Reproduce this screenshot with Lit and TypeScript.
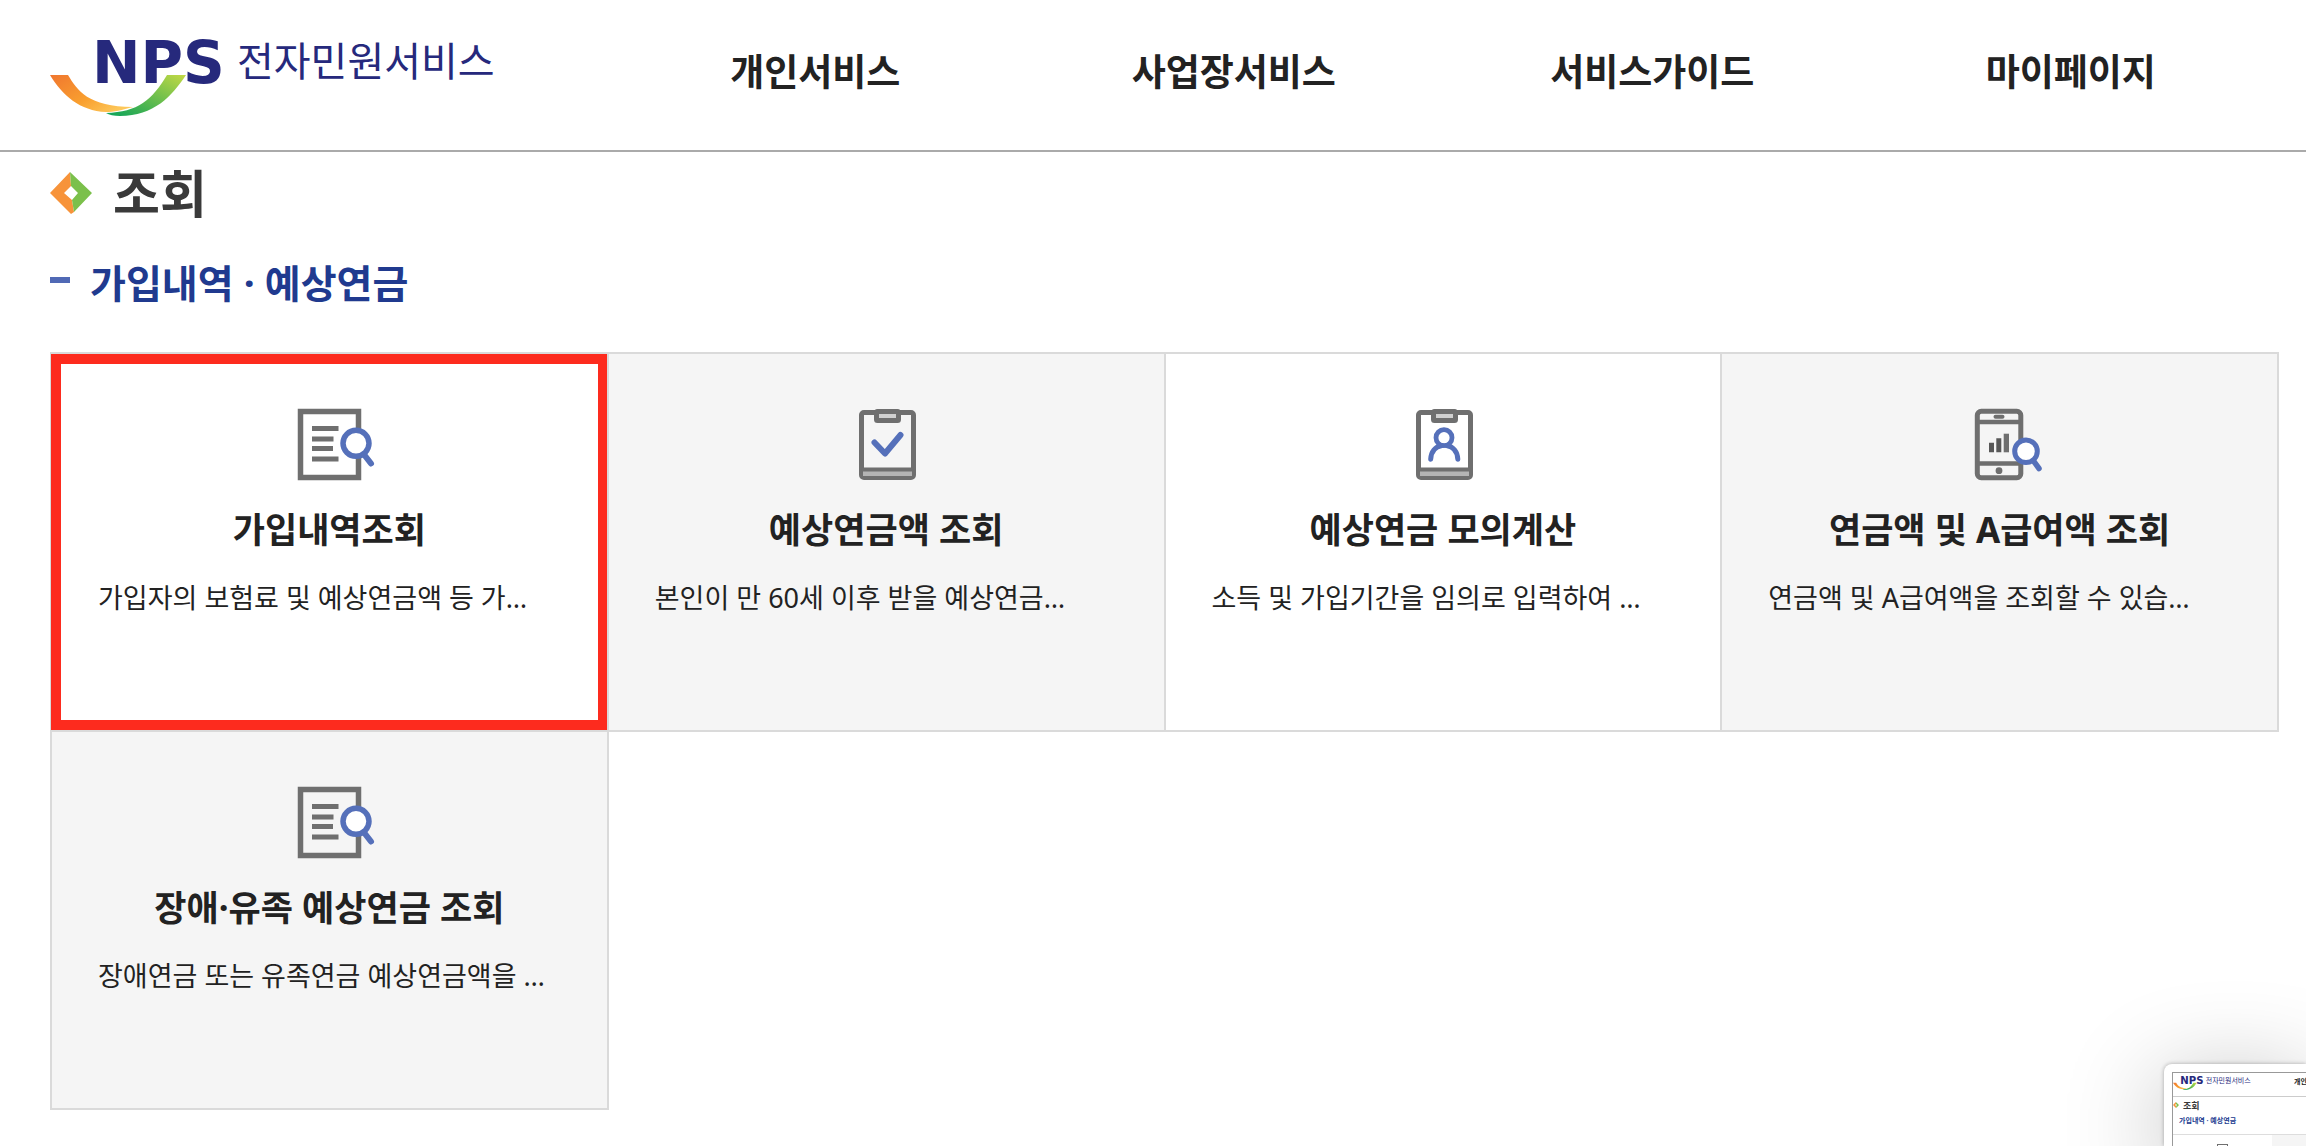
import { LitElement, html, svg, css } from "lit";
import { customElement, property } from "lit/decorators.js";
import { classMap } from "lit/directives/class-map.js";

type IconName = "document" | "check" | "person" | "phone";

interface Service {
  icon: IconName;
  title: string;
  text: string;
  shaded: boolean;
  highlighted?: boolean;
}

const MENU = ["개인서비스", "사업장서비스", "서비스가이드", "마이페이지"];

const SERVICES: Service[] = [
  { icon: "document", title: "가입내역조회", text: "가입자의 보험료 및 예상연금액 등 가…", shaded: false, highlighted: true },
  { icon: "check", title: "예상연금액 조회", text: "본인이 만 60세 이후 받을 예상연금…", shaded: true },
  { icon: "person", title: "예상연금 모의계산", text: "소득 및 가입기간을 임의로 입력하여 …", shaded: false },
  { icon: "phone", title: "연금액 및 A급여액 조회", text: "연금액 및 A급여액을 조회할 수 있습…", shaded: true },
  { icon: "document", title: "장애·유족 예상연금 조회", text: "장애연금 또는 유족연금 예상연금액을 …", shaded: true },
];

const GREY = "#6f6f6f";
const BLUE = "#5570ba";

const clipboard = svg`
  <rect x="25.5" y="4.5" width="52" height="65" rx="2.5" fill="none" stroke=${GREY} stroke-width="5"/>
  <rect x="27" y="62" width="49" height="6" fill="#b4b4b4"/>
  <path d="M25.5 61.5H77.5" stroke=${GREY} stroke-width="4"/>
  <rect x="40.5" y="3.5" width="22" height="9" rx="1" fill="#d0d0d0" stroke=${GREY} stroke-width="5"/>`;

const ICONS = {
  document: svg`
    <rect x="21.5" y="3.5" width="58" height="66" fill="none" stroke=${GREY} stroke-width="5.5"/>
    <path d="M33 20.5H59.5M33 31H54.5M33 40.5H54M33 51H59.5" stroke=${GREY} stroke-width="5"/>
    <circle cx="77" cy="35.3" r="13" fill="#fff" stroke=${BLUE} stroke-width="5.5"/>
    <path d="M85 46.5L92 55.5" stroke=${BLUE} stroke-width="6" stroke-linecap="round"/>`,
  check: svg`${clipboard}
    <path d="M38.5 34.5L49 45.5L64.5 27" fill="none" stroke=${BLUE} stroke-width="6" stroke-linecap="round" stroke-linejoin="round"/>`,
  person: svg`${clipboard}
    <circle cx="51" cy="29.7" r="8" fill="none" stroke=${BLUE} stroke-width="4.8"/>
    <path d="M37.7 51.2C38 44 42 38.5 49 37.5M64.8 51.2C64.5 44 60.5 38.5 53.5 37.5" fill="none" stroke=${BLUE} stroke-width="5" stroke-linecap="round"/>`,
  phone: svg`
    <rect x="27.3" y="3.3" width="43.5" height="66.4" rx="4" fill="none" stroke=${GREY} stroke-width="5"/>
    <path d="M27.3 14H70.8M27.3 55.5H70.8" stroke=${GREY} stroke-width="4.5"/>
    <path d="M45.5 8.7H52.5" stroke=${GREY} stroke-width="4" stroke-linecap="round"/>
    <circle cx="49" cy="62.7" r="3.4" fill=${GREY}/>
    <path d="M39 34.7H44V44.3H39ZM46.3 30.3H51.3V44.3H46.3Z" fill="#585858"/>
    <path d="M53.7 25.7H59V44.3H53.7Z" fill=${GREY}/>
    <circle cx="76" cy="43.3" r="11.3" fill="#fff" stroke=${BLUE} stroke-width="5"/>
    <path d="M83.5 53L89 60.5" stroke=${BLUE} stroke-width="5.5" stroke-linecap="round"/>`,
};

@customElement("nps-logo")
export class NpsLogo extends LitElement {
  static styles = css`
    :host { display: block; }
    .logo { display: block; width: 100%; height: auto; overflow: visible; }
    .mark { font: 700 58px "DejaVu Sans", sans-serif; fill: #26297c; }
    .name { font: 400 40px "Noto Sans CJK KR", sans-serif; fill: #26297c; }
  `;

  render() {
    return html`
      <svg class="logo" viewBox="0 0 446 90" role="img" aria-label="NPS 전자민원서비스">
        <defs>
          <linearGradient id="warm" x1="0" y1="0" x2="1" y2="0.7">
            <stop offset="0" stop-color="#f0762f"/>
            <stop offset="0.6" stop-color="#f9a02f"/>
            <stop offset="1" stop-color="#fdc85a"/>
          </linearGradient>
          <linearGradient id="fresh" x1="0" y1="1" x2="1" y2="0">
            <stop offset="0" stop-color="#0aa35a"/>
            <stop offset="0.3" stop-color="#3fb152"/>
            <stop offset="1" stop-color="#c3d945"/>
          </linearGradient>
        </defs>
        <text class="mark" x="42" y="53">NPS</text>
        <text class="name" x="187" y="46">전자민원서비스</text>
        <path fill="url(#warm)" d="M0 45H18C27 60 38 77 83 77C72 80 64 82 56 82C30 81 12 65 0 45Z"/>
        <path fill="url(#fresh)" d="M117 45H136C122 66 104 86 70 86C64 86 59 85 56 83C88 82 102 70 117 45Z"/>
      </svg>`;
  }
}

@customElement("diamond-mark")
export class DiamondMark extends LitElement {
  static styles = css`
    :host { display: block; }
    .mark { display: block; width: 100%; height: auto; }
  `;

  render() {
    return html`
      <svg class="mark" viewBox="0 0 42 42" aria-hidden="true">
        <path fill="#f7933a" d="M20 0L0 21L21 42L24 40L22 28L14 21L21 14Z"/>
        <path fill="#7bc04b" d="M20 0L42 21L24 40L22 28L28 21L21 14Z"/>
      </svg>`;
  }
}

@customElement("service-card")
export class ServiceCard extends LitElement {
  @property({ attribute: false }) service!: Service;

  static styles = css`
    :host { display: block; margin: 0 -2px -2px 0; }
    .card {
      position: relative;
      display: flex;
      flex-direction: column;
      gap: 30px;
      box-sizing: border-box;
      min-height: 380px;
      padding: 54px 46px;
      border: 2px solid #dadada;
      background: #fff;
      color: #222;
      text-decoration: none;
    }
    .shaded { background: #f5f5f5; }
    .highlighted::after {
      content: "";
      position: absolute;
      inset: 0 -1px;
      border: 10px solid #fd2b1e;
    }
    .icon { display: block; align-self: center; width: 100px; height: 72px; overflow: visible; }
    .title { margin: 0; font-size: 35px; line-height: 40px; font-weight: 700; text-align: center; }
    .text {
      margin: 0;
      font-size: 27px;
      line-height: 36px;
      white-space: nowrap;
      overflow: hidden;
      text-overflow: ellipsis;
    }
  `;

  render() {
    const { icon, title, text, shaded, highlighted } = this.service;
    return html`
      <a class=${classMap({ card: true, shaded, highlighted: !!highlighted })} href="#">
        <svg class="icon" viewBox="0 0 100 72" aria-hidden="true">${ICONS[icon]}</svg>
        <h3 class="title">${title}</h3>
        <p class="text">${text}</p>
      </a>`;
  }
}

@customElement("page-preview")
export class PagePreview extends LitElement {
  static styles = css`
    :host {
      display: block;
      box-sizing: border-box;
      padding: 8px 0 0 8px;
      border-radius: 8px 0 0 0;
      background: #fff;
      box-shadow: 0 0 4px rgba(0, 0, 0, 0.3), 0 20px 100px rgba(0, 0, 0, 0.3);
    }
    .page {
      box-sizing: border-box;
      height: 100%;
      overflow: hidden;
      border: solid #999;
      border-width: 1px 0 0 1px;
    }
    .top {
      display: flex;
      justify-content: space-between;
      height: 23px;
      border-bottom: 1px solid #ccc;
      font-size: 7px;
      line-height: 18px;
      font-weight: 700;
      color: #222;
      white-space: nowrap;
    }
    .logo { width: 78px; padding-top: 2px; }
    .menu { width: 12px; overflow: hidden; }
    .heading { display: flex; align-items: center; gap: 4px; height: 16px; font-size: 9px; font-weight: 700; color: #3a3a3a; }
    .mark { width: 6px; }
    .sub { height: 21px; padding-left: 6px; font-size: 7px; line-height: 16px; font-weight: 700; color: #203a8f; white-space: nowrap; }
    .cells { display: grid; grid-template-columns: 99px 1fr; height: 24px; border-top: 1px solid #ddd; }
    .cell { display: flex; justify-content: center; padding-top: 9px; }
    .cell + .cell { background: #f5f5f5; }
    .icon { width: 9px; height: 12px; border: 1px solid #6f6f6f; }
  `;

  render() {
    return html`
      <div class="page">
        <div class="top"><nps-logo class="logo"></nps-logo><span class="menu">개인</span></div>
        <div class="heading"><diamond-mark class="mark"></diamond-mark>조회</div>
        <div class="sub">가입내역 · 예상연금</div>
        <div class="cells"><div class="cell"><span class="icon"></span></div><div class="cell"></div></div>
      </div>`;
  }
}

@customElement("app-root")
export class AppRoot extends LitElement {
  static styles = css`
    :host {
      display: block;
      position: relative;
      box-sizing: border-box;
      min-height: 100vh;
      overflow: hidden;
      background: #fff;
      color: #222;
      font-family: "Noto Sans", "Noto Sans CJK KR", sans-serif;
    }
    .header {
      display: flex;
      align-items: flex-start;
      gap: 110px;
      height: 150px;
      padding: 0 26px 0 50px;
      border-bottom: 2px solid #aaa;
    }
    .home { flex: none; width: 446px; padding-top: 30px; }
    .menu { flex: 1; display: grid; grid-template-columns: repeat(4, 1fr); padding-top: 47px; }
    .link {
      color: #222;
      font-size: 37px;
      line-height: 50px;
      font-weight: 700;
      text-align: center;
      text-decoration: none;
    }
    .main { padding: 11px 29px 38px 50px; }
    .heading { display: flex; align-items: center; gap: 21px; margin: 0; font-size: 51px; line-height: 60px; color: #3a3a3a; }
    .mark { width: 42px; }
    .sub { display: flex; align-items: flex-start; gap: 20px; margin: 36px 0 45px; font-size: 39px; line-height: 48px; color: #203a8f; }
    .sub::before { content: ""; width: 20px; height: 6px; margin-top: 18px; background: #5069b5; }
    .grid { display: grid; grid-template-columns: repeat(4, minmax(0, 1fr)); }
    .preview { position: absolute; right: 0; bottom: 0; width: 142px; height: 82px; }
  `;

  render() {
    return html`
      <header class="header">
        <a class="home" href="#"><nps-logo></nps-logo></a>
        <nav class="menu">${MENU.map((m) => html`<a class="link" href="#">${m}</a>`)}</nav>
      </header>
      <main class="main">
        <h1 class="heading"><diamond-mark class="mark"></diamond-mark>조회</h1>
        <h2 class="sub">가입내역 · 예상연금</h2>
        <section class="grid">
          ${SERVICES.map((s) => html`<service-card .service=${s}></service-card>`)}
        </section>
      </main>
      <page-preview class="preview" aria-hidden="true"></page-preview>`;
  }
}
